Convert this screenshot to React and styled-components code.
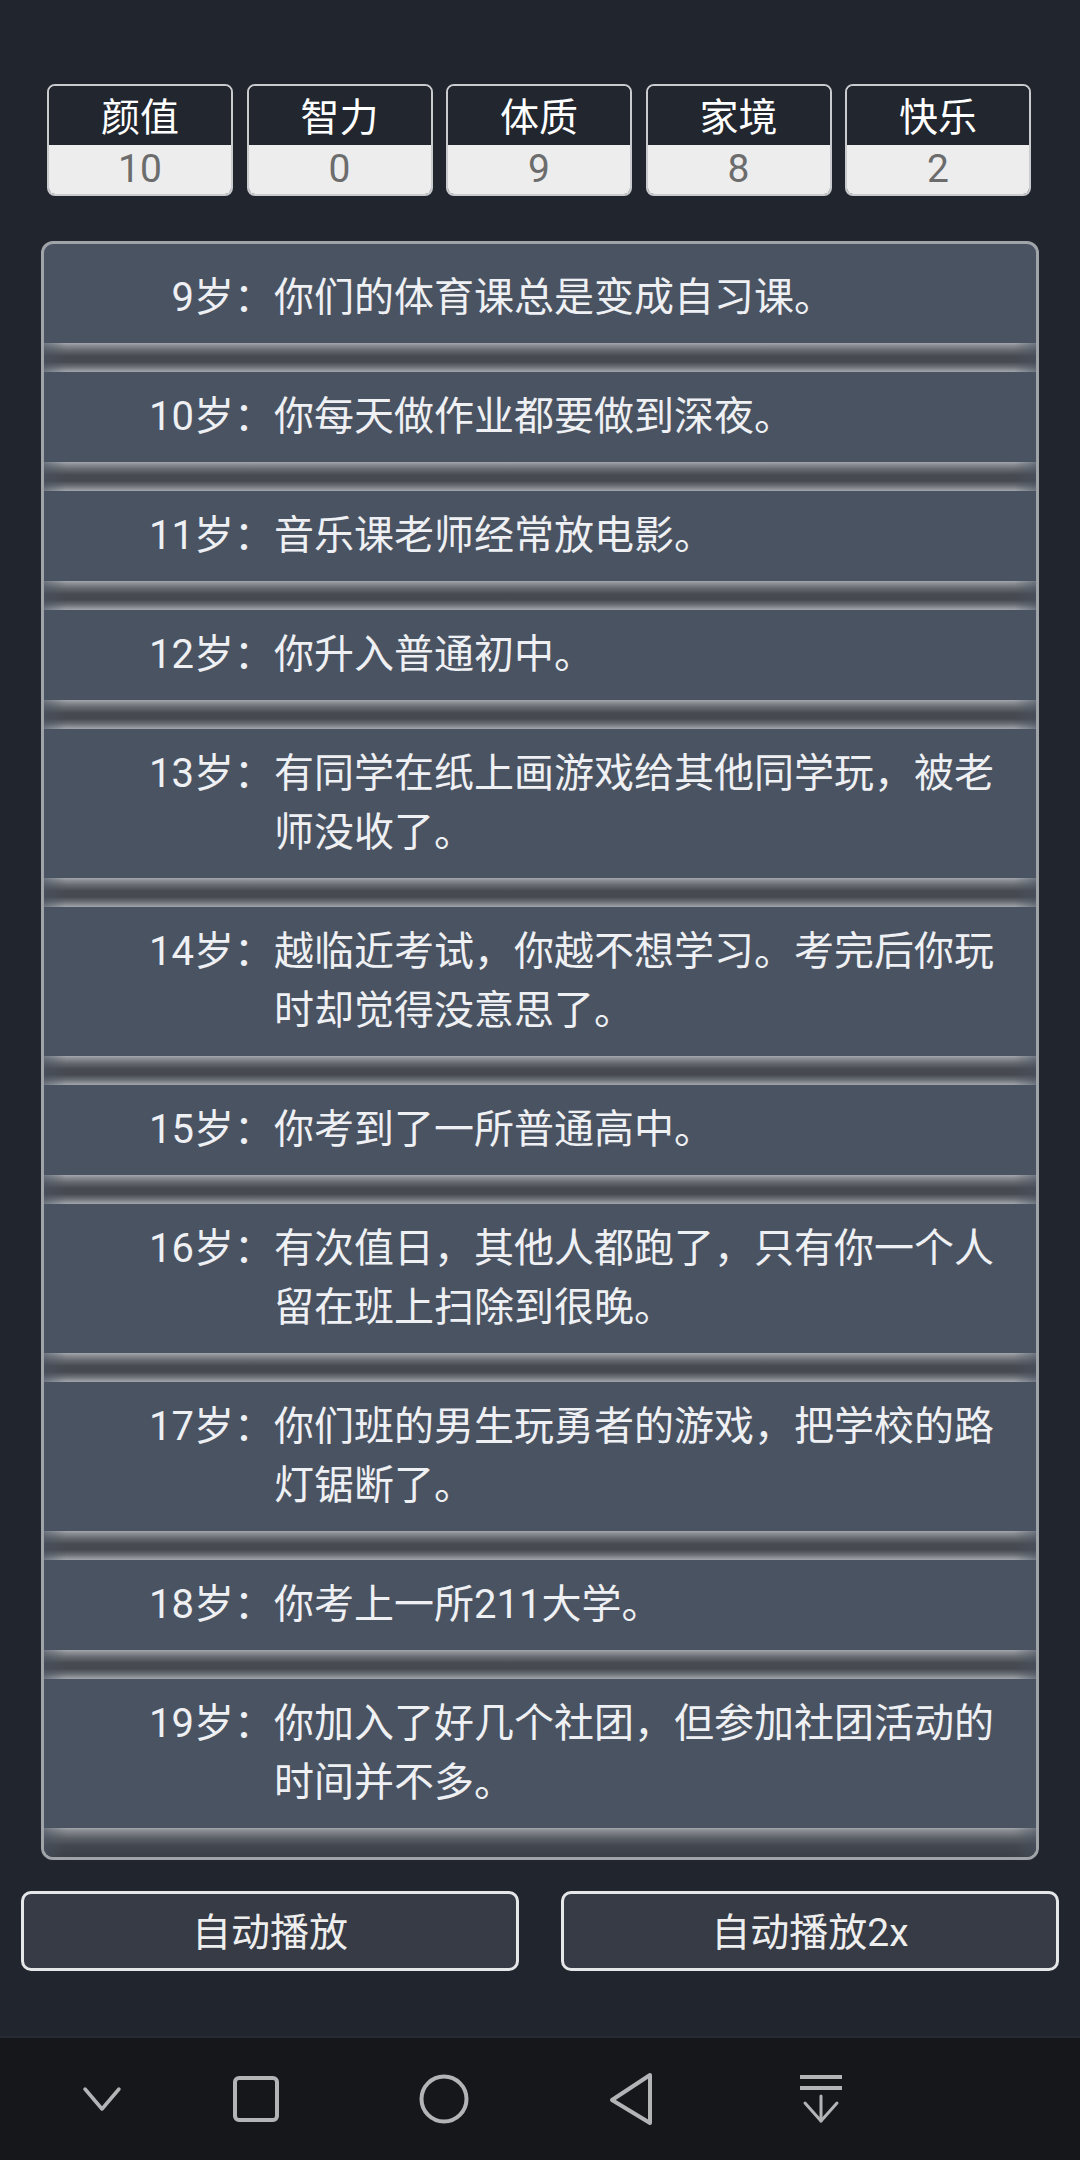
import React from "react";
import styled, { createGlobalStyle } from "styled-components";

const GlobalStyle = createGlobalStyle`
  body {
    margin: 0;
    background-color: #20252e;
    font-family: Roboto, "Noto Sans CJK SC", sans-serif;
  }
`;

const stats = [
  { name: "颜值", value: 10 },
  { name: "智力", value: 0 },
  { name: "体质", value: 9 },
  { name: "家境", value: 8 },
  { name: "快乐", value: 2 },
];

const events = [
  { age: 9, text: "你们的体育课总是变成自习课。" },
  { age: 10, text: "你每天做作业都要做到深夜。" },
  { age: 11, text: "音乐课老师经常放电影。" },
  { age: 12, text: "你升入普通初中。" },
  { age: 13, text: "有同学在纸上画游戏给其他同学玩，被老师没收了。" },
  { age: 14, text: "越临近考试，你越不想学习。考完后你玩时却觉得没意思了。" },
  { age: 15, text: "你考到了一所普通高中。" },
  { age: 16, text: "有次值日，其他人都跑了，只有你一个人留在班上扫除到很晚。" },
  { age: 17, text: "你们班的男生玩勇者的游戏，把学校的路灯锯断了。" },
  { age: 18, text: "你考上一所211大学。" },
  { age: 19, text: "你加入了好几个社团，但参加社团活动的时间并不多。" },
];

const Screen = styled.div`
  width: 1080px;
  height: 2160px;
  display: flex;
  flex-direction: column;
  background-color: #20252e;
  overflow: hidden;
`;

const StatsRow = styled.div`
  display: grid;
  grid-template-columns: repeat(5, 186px);
  column-gap: 13.5px;
  padding: 84px 47px 0;
`;

const StatBox = styled.div`
  display: flex;
  flex-direction: column;
  border: 2px solid #c9cbce;
  border-radius: 8px;
  overflow: hidden;
  height: 112px;
  box-sizing: border-box;
`;

const StatName = styled.div`
  height: 59px;
  display: flex;
  align-items: center;
  justify-content: center;
  background-color: #21262f;
  color: #ffffff;
  font-size: 39px;
  line-height: 1;
  padding-top: 6px;
  box-sizing: border-box;
`;

const StatValue = styled.div`
  flex: 1;
  display: flex;
  align-items: center;
  justify-content: center;
  background-color: #ededed;
  color: #6c6c6c;
  font-size: 39px;
  line-height: 1;
`;

const Panel = styled.div`
  margin: 45px 41px 0;
  border: 3px solid #a0a3a8;
  border-radius: 12px;
  overflow: hidden;
  background-color: #4a5362;
  padding-top: 9px;
`;

const Row = styled.div`
  display: grid;
  grid-template-columns: 230px 1fr;
  padding: 15px 36px 16px 0;
  background-color: #4a5362;
  color: #eef0f3;
  font-size: 40px;
  line-height: 59px;
`;

const Age = styled.span`
  text-align: right;
  white-space: nowrap;
`;

const Text = styled.span``;

const Band = styled.div`
  position: relative;
  height: 29px;
  background: ${({ $last }) =>
    $last
      ? "linear-gradient(to bottom, #a3a6ab 0%, #8a8d92 8%, #5c6067 35%, #43474f 60%, #3b3f47 100%)"
      : "linear-gradient(to bottom, #a4a8ae 0%, #8c8f94 8%, #666a70 25%, #474a51 45%, #464950 65%, #6a6e75 82%, #8e9298 93%, #a2a6ac 100%)"};
  &::after {
    content: "";
    position: absolute;
    inset: 0;
    background: linear-gradient(
      to right,
      rgba(74, 83, 98, 0.55) 0px,
      rgba(74, 83, 98, 0) 22px,
      rgba(74, 83, 98, 0) calc(100% - 22px),
      rgba(74, 83, 98, 0.55) 100%
    );
  }
`;

const Buttons = styled.div`
  display: grid;
  grid-template-columns: 1fr 1fr;
  column-gap: 42px;
  padding: 0 21px;
  margin-top: 31px;
`;

const Button = styled.button`
  height: 80px;
  background-color: #363b45;
  border: 3px solid #e6e7e9;
  border-radius: 10px;
  color: #eeeeee;
  font-family: Roboto, "Noto Sans CJK SC", sans-serif;
  font-size: 39px;
  line-height: 1;
  padding: 5px 0 0;
`;

const Spacer = styled.div`
  flex: 1;
`;

const NavBar = styled.div`
  height: 124px;
  background-color: #15171b;
  border-top: 2px solid #262a32;
  display: flex;
  align-items: center;
  padding-left: 62px;
  box-sizing: border-box;
`;

const NavItem = styled.div`
  width: 80px;
  display: flex;
  justify-content: center;
  align-items: center;
  margin-right: ${({ $gap }) => $gap}px;
`;

const iconColor = "#b3b4b6";

const App = () => {
  return (
    <Screen>
      <GlobalStyle />
      <StatsRow>
        {stats.map((s) => (
          <StatBox key={s.name}>
            <StatName>{s.name}</StatName>
            <StatValue>{s.value}</StatValue>
          </StatBox>
        ))}
      </StatsRow>

      <Panel>
        {events.map((e, index) => (
          <React.Fragment key={e.age}>
            <Row>
              <Age>{e.age}岁：</Age>
              <Text>{e.text}</Text>
            </Row>
            <Band $last={index === events.length - 1} />
          </React.Fragment>
        ))}
      </Panel>

      <Buttons>
        <Button>自动播放</Button>
        <Button>自动播放2x</Button>
      </Buttons>

      <Spacer />

      <NavBar>
        <NavItem $gap={74}>
          <svg width="40" height="28" viewBox="0 0 40 28">
            <polyline points="3,4 20,24 37,4" fill="none" stroke={iconColor} strokeWidth="3.5" strokeLinecap="round" strokeLinejoin="round" />
          </svg>
        </NavItem>
        <NavItem $gap={108}>
          <svg width="48" height="48" viewBox="0 0 48 48">
            <rect x="3" y="3" width="42" height="42" rx="4" fill="none" stroke={iconColor} strokeWidth="4" />
          </svg>
        </NavItem>
        <NavItem $gap={107}>
          <svg width="52" height="52" viewBox="0 0 52 52">
            <circle cx="26" cy="26" r="22.5" fill="none" stroke={iconColor} strokeWidth="4" />
          </svg>
        </NavItem>
        <NavItem $gap={110}>
          <svg width="50" height="56" viewBox="0 0 50 56">
            <path d="M44 4 L44 52 L6 29 Z" fill="none" stroke={iconColor} strokeWidth="4" strokeLinejoin="round" />
          </svg>
        </NavItem>
        <NavItem $gap={0}>
          <svg width="48" height="52" viewBox="0 0 48 52">
            <line x1="3" y1="4" x2="45" y2="4" stroke={iconColor} strokeWidth="4" />
            <line x1="3" y1="15" x2="45" y2="15" stroke={iconColor} strokeWidth="4" />
            <line x1="24" y1="23" x2="24" y2="48" stroke={iconColor} strokeWidth="3" strokeLinecap="round" />
            <polyline points="8,30 24,48 40,30" fill="none" stroke={iconColor} strokeWidth="3" strokeLinecap="round" strokeLinejoin="round" />
          </svg>
        </NavItem>
      </NavBar>
    </Screen>
  );
};

export default App;
